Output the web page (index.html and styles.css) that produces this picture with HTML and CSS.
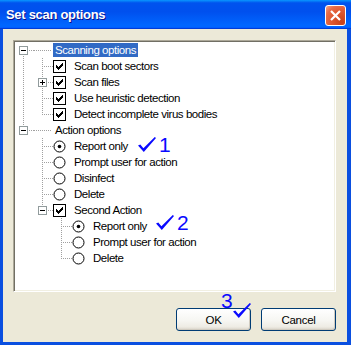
FILE: index.html
```html
<!DOCTYPE html>
<html lang="en">
<head>
    <meta charset="UTF-8">
    <title>Set scan options</title>
    <link rel="stylesheet" href="styles.css">
</head>
<body>

<svg class="defs" width="0" height="0">
    <symbol id="minus" viewBox="0 0 9 9">
        <rect x=".5" y=".5" width="8" height="8" fill="#fff" stroke="#919b9c"/>
        <path d="M2 4.5h5" stroke="#000"/>
    </symbol>
    <symbol id="plus" viewBox="0 0 9 9">
        <rect x=".5" y=".5" width="8" height="8" fill="#fff" stroke="#919b9c"/>
        <path d="M2 4.5h5M4.5 2v5" stroke="#000"/>
    </symbol>
    <symbol id="check" viewBox="0 0 13 13">
        <rect x=".5" y=".5" width="12" height="12" fill="#fff" stroke="#000"/>
        <path d="M3 5H4V6H5V7H6V6H7V5H8V4H9V3H10V6H9V7H8V8H7V9H6V10H5V9H4V8H3Z" fill="#000"/>
    </symbol>
    <symbol id="radio" viewBox="0 0 13 13">
        <circle cx="6.5" cy="6.5" r="5.5" fill="#fff" stroke="#000"/>
    </symbol>
    <symbol id="radio-on" viewBox="0 0 13 13">
        <circle cx="6.5" cy="6.5" r="5.5" fill="#fff" stroke="#000"/>
        <circle cx="6.5" cy="6.5" r="1.8" fill="#000"/>
    </symbol>
    <symbol id="tick" viewBox="0 0 18 15">
        <path d="M0 8.6L2.3 7.4L5.4 11.2L16.8 0L18 .9L5.8 15Z"/>
    </symbol>
</svg>

<div class="window">
    <div class="titlebar">
        <span class="title">Set scan options</span>
        <span class="close">
            <svg width="19" height="19" viewBox="0 0 19 19"><path d="M5 5l9 9M14 5l-9 9" stroke="#fff" stroke-width="2.2"/></svg>
        </span>
    </div>

    <div class="client">
        <div class="tree">
            <div class="row">
                <span class="c top"><svg class="box"><use href="#minus"/></svg></span>
                <span class="c lead"></span>
                <span class="label sel">Scanning options</span>
            </div>
            <div class="row">
                <span class="c v"></span><span class="c tee"></span>
                <svg class="state"><use href="#check"/></svg>
                <span class="label">Scan boot sectors</span>
            </div>
            <div class="row">
                <span class="c v"></span><span class="c tee"><svg class="box"><use href="#plus"/></svg></span>
                <svg class="state"><use href="#check"/></svg>
                <span class="label">Scan files</span>
            </div>
            <div class="row">
                <span class="c v"></span><span class="c tee"></span>
                <svg class="state"><use href="#check"/></svg>
                <span class="label">Use heuristic detection</span>
            </div>
            <div class="row">
                <span class="c v"></span><span class="c ell"></span>
                <svg class="state"><use href="#check"/></svg>
                <span class="label">Detect incomplete virus bodies</span>
            </div>
            <div class="row">
                <span class="c ell"><svg class="box"><use href="#minus"/></svg></span>
                <span class="c lead"></span>
                <span class="label">Action options</span>
            </div>
            <div class="row">
                <span class="c"></span><span class="c tee"></span>
                <svg class="state"><use href="#radio-on"/></svg>
                <span class="label">Report only</span>
            </div>
            <div class="row">
                <span class="c"></span><span class="c tee"></span>
                <svg class="state"><use href="#radio"/></svg>
                <span class="label">Prompt user for action</span>
            </div>
            <div class="row">
                <span class="c"></span><span class="c tee"></span>
                <svg class="state"><use href="#radio"/></svg>
                <span class="label">Disinfect</span>
            </div>
            <div class="row">
                <span class="c"></span><span class="c tee"></span>
                <svg class="state"><use href="#radio"/></svg>
                <span class="label">Delete</span>
            </div>
            <div class="row">
                <span class="c"></span><span class="c ell"><svg class="box"><use href="#minus"/></svg></span>
                <svg class="state"><use href="#check"/></svg>
                <span class="label">Second Action</span>
            </div>
            <div class="row">
                <span class="c"></span><span class="c"></span><span class="c tee"></span>
                <svg class="state"><use href="#radio-on"/></svg>
                <span class="label">Report only</span>
            </div>
            <div class="row">
                <span class="c"></span><span class="c"></span><span class="c tee"></span>
                <svg class="state"><use href="#radio"/></svg>
                <span class="label">Prompt user for action</span>
            </div>
            <div class="row">
                <span class="c"></span><span class="c"></span><span class="c ell"></span>
                <svg class="state"><use href="#radio"/></svg>
                <span class="label">Delete</span>
            </div>
        </div>

        <div class="buttons">
            <button class="btn">OK</button>
            <button class="btn">Cancel</button>
        </div>
    </div>

    <!-- hand drawn marks over the screenshot -->
    <div class="note note-1"><svg class="tick"><use href="#tick"/></svg><span>1</span></div>
    <div class="note note-2"><svg class="tick"><use href="#tick"/></svg><span>2</span></div>
    <div class="note note-3"><span>3</span><svg class="tick"><use href="#tick"/></svg></div>
</div>

</body>
</html>
```

FILE: styles.css
```css
body {
    margin: 0;
    background: #fff;
}
.defs {
    position: absolute;
    width: 0;
    height: 0;
}
.window {
    --dh: repeating-linear-gradient(90deg, #a0a0a0 0 1px, transparent 1px 2px);
    --dv: repeating-linear-gradient(180deg, #a0a0a0 0 1px, transparent 1px 2px);
    position: relative;
    width: 351px;
    height: 345px;
    box-sizing: border-box;
    display: flex;
    flex-direction: column;
    font-family: "Liberation Sans", Arial, sans-serif;
    font-size: 11.5px;
    letter-spacing: -0.45px;
}
.titlebar {
    flex: none;
    height: 29px;
    display: flex;
    align-items: center;
    justify-content: space-between;
    padding: 0 5px 0 6px;
    background: linear-gradient(180deg, #0997ff, #0053ee 10%, #0050ee 40%, #0066ff 86%, #0066ff 92%, #005bff 95%, #003dd7 97%, #003dd7);
}
.title {
    color: #fff;
    font-weight: bold;
    font-size: 13px;
    letter-spacing: -0.3px;
    text-shadow: 1px 1px #0f1089;
}
.close {
    width: 19px;
    height: 19px;
    border: 1px solid #fff;
    border-radius: 3px;
    background: radial-gradient(circle at 85% 85%, #c94118 0, #e05a33 50%, #e86d48 75%, #f6a78c 100%);
    display: flex;
    margin-top: 1px;
}
.client {
    flex: 1;
    display: flex;
    flex-direction: column;
    background: #ece9d8;
    border-left: 3px solid #0a4fe0;
    border-right: 4px solid #0a4fe0;
    border-bottom: 3px solid #0a4fe0;
    padding: 11px 11px 11px 10px;
}
.tree {
    height: 252px;
    box-sizing: border-box;
    background: #fff;
    border: 1px solid;
    border-color: #aca899 #fff #fff #aca899;
    box-shadow: inset 1px 1px #716f64, inset -1px -1px #f1efe2;
    padding: 1px;
}
.row {
    height: 16px;
    display: flex;
    align-items: center;
    color: #000;
}
.c {
    flex: none;
    width: 19px;
    height: 16px;
    display: flex;
    align-items: center;
    background-repeat: no-repeat;
}
.c.v {
    background-image: var(--dv);
    background-size: 1px 16px;
    background-position: 8px 0;
}
.c.tee {
    background-image: var(--dv), var(--dh);
    background-size: 1px 16px, 11px 1px;
    background-position: 8px 0, 8px 8px;
}
.c.ell {
    background-image: var(--dv), var(--dh);
    background-size: 1px 8px, 11px 1px;
    background-position: 8px 0, 8px 8px;
}
.c.top {
    background-image: var(--dv), var(--dh);
    background-size: 1px 8px, 11px 1px;
    background-position: 8px 8px, 8px 8px;
}
.c.lead {
    background-image: var(--dh);
    background-size: 17px 1px;
    background-position: 0 8px;
}
.box {
    width: 9px;
    height: 9px;
    margin-left: 4px;
}
.state {
    flex: none;
    width: 13px;
    height: 13px;
    margin-right: 6px;
}
.label {
    padding: 0 2px;
    line-height: 14px;
    white-space: nowrap;
}
.label.sel {
    background: #316ac5;
    color: #fff;
}
.buttons {
    display: flex;
    justify-content: flex-end;
    gap: 10px;
    margin-top: 16px;
}
.btn {
    width: 75px;
    height: 23px;
    padding: 0;
    border: 1px solid #003c74;
    border-radius: 3px;
    background: linear-gradient(180deg, #fff, #f6f6f2 55%, #eeece4 85%, #d6d0c5);
    box-shadow: inset -1px -1px #d0cbc0;
    font-family: inherit;
    font-size: 11.5px;
    letter-spacing: -0.3px;
    color: #000;
}
.note {
    position: absolute;
    display: flex;
    align-items: flex-end;
    color: #0a0aff;
    fill: #0a0aff;
    font-size: 21px;
    letter-spacing: 0;
    line-height: 15px;
}
.tick {
    width: 18px;
    height: 15px;
}
.note-1 {
    left: 138px;
    top: 137px;
}
.note-1 span {
    margin-left: 3px;
}
.note-2 {
    left: 156px;
    top: 215px;
}
.note-2 span {
    margin-left: 3px;
}
.note-3 {
    left: 221px;
    top: 293px;
    align-items: flex-start;
}
.note-3 .tick {
    margin-top: 10px;
}
```
